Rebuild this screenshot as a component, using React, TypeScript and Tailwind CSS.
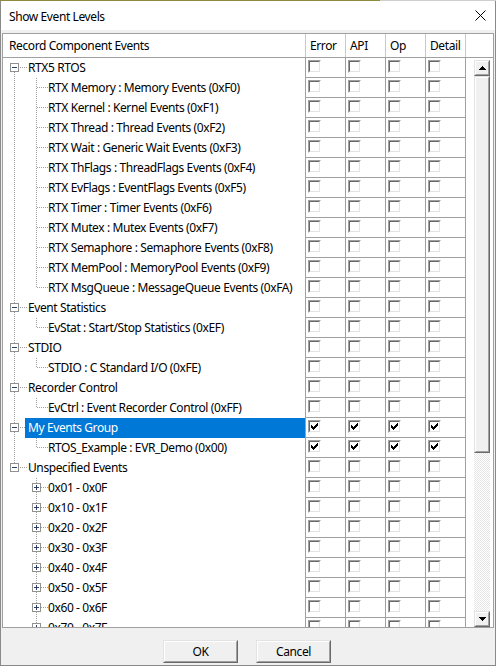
import React from "react";

type Kind = "root" | "leaf" | "collapsed";
type Row = {
  label: string;
  kind: Kind;
  firstRoot?: boolean;
  lastRoot?: boolean;
  lastChild?: boolean;
  parentLast?: boolean;
  checked?: boolean;
  selected?: boolean;
};

const rtx = [
  "RTX Memory : Memory Events (0xF0)",
  "RTX Kernel : Kernel Events (0xF1)",
  "RTX Thread : Thread Events (0xF2)",
  "RTX Wait : Generic Wait Events (0xF3)",
  "RTX ThFlags : ThreadFlags Events (0xF4)",
  "RTX EvFlags : EventFlags Events (0xF5)",
  "RTX Timer : Timer Events (0xF6)",
  "RTX Mutex : Mutex Events (0xF7)",
  "RTX Semaphore : Semaphore Events (0xF8)",
  "RTX MemPool : MemoryPool Events (0xF9)",
  "RTX MsgQueue : MessageQueue Events (0xFA)",
];

const ROWS: Row[] = [
  { label: "RTX5 RTOS", kind: "root", firstRoot: true },
  ...rtx.map((l, i) => ({ label: l, kind: "leaf" as Kind, lastChild: i === rtx.length - 1 })),
  { label: "Event Statistics", kind: "root" },
  { label: "EvStat : Start/Stop Statistics (0xEF)", kind: "leaf", lastChild: true },
  { label: "STDIO", kind: "root" },
  { label: "STDIO : C Standard I/O (0xFE)", kind: "leaf", lastChild: true },
  { label: "Recorder Control", kind: "root" },
  { label: "EvCtrl : Event Recorder Control (0xFF)", kind: "leaf", lastChild: true },
  { label: "My Events Group", kind: "root", selected: true, checked: true },
  { label: "RTOS_Example : EVR_Demo (0x00)", kind: "leaf", lastChild: true, checked: true },
  { label: "Unspecified Events", kind: "root", lastRoot: true },
  ...["0x01 - 0x0F", "0x10 - 0x1F", "0x20 - 0x2F", "0x30 - 0x3F", "0x40 - 0x4F", "0x50 - 0x5F", "0x60 - 0x6F", "0x70 - 0x7F"].map(
    (l) => ({ label: l, kind: "collapsed" as Kind, parentLast: true })
  ),
];

const DOT = "#a0a0a0";

function Dotted({ x1, y1, x2, y2 }: { x1: number; y1: number; x2: number; y2: number }) {
  return <line x1={x1} y1={y1} x2={x2} y2={y2} stroke={DOT} strokeWidth={1} strokeDasharray="1 1" />;
}

function Box({ x, plus }: { x: number; plus: boolean }) {
  return (
    <g>
      <rect x={x + 0.5} y={5.5} width={8} height={8} fill="#ffffff" stroke="#919191" strokeWidth={1} />
      <line x1={x + 2} y1={9.5} x2={x + 7} y2={9.5} stroke="#2d3f6e" strokeWidth={1} />
      {plus && <line x1={x + 4.5} y1={7} x2={x + 4.5} y2={12} stroke="#2d3f6e" strokeWidth={1} />}
    </g>
  );
}

function TreeLines({ row }: { row: Row }) {
  if (row.kind === "root") {
    return (
      <svg width={25} height={20} className="shrink-0 block" shapeRendering="crispEdges">
        {!row.firstRoot && <Dotted x1={11.5} y1={0} x2={11.5} y2={5} />}
        {!row.lastRoot && <Dotted x1={11.5} y1={14} x2={11.5} y2={20} />}
        <Dotted x1={17} y1={9.5} x2={25} y2={9.5} />
        <Box x={7} plus={false} />
      </svg>
    );
  }
  return (
    <svg width={45} height={20} className="shrink-0 block" shapeRendering="crispEdges">
      {!row.parentLast && <Dotted x1={11.5} y1={0} x2={11.5} y2={20} />}
      {row.kind === "leaf" ? (
        <>
          <Dotted x1={33.5} y1={0} x2={33.5} y2={row.lastChild ? 10 : 20} />
          <Dotted x1={34} y1={9.5} x2={45} y2={9.5} />
        </>
      ) : (
        <>
          <Dotted x1={33.5} y1={0} x2={33.5} y2={5} />
          <Dotted x1={33.5} y1={14} x2={33.5} y2={20} />
          <Dotted x1={38} y1={9.5} x2={45} y2={9.5} />
          <Box x={29} plus={true} />
        </>
      )}
    </svg>
  );
}

function CheckMark() {
  const px: [number, number][] = [
    [6, 0],
    [5, 1], [6, 1],
    [0, 2], [4, 2], [5, 2], [6, 2],
    [0, 3], [1, 3], [3, 3], [4, 3], [5, 3],
    [0, 4], [1, 4], [2, 4], [3, 4], [4, 4],
    [1, 5], [2, 5], [3, 5],
    [2, 6],
  ];
  return (
    <svg width={7} height={7} className="block" shapeRendering="crispEdges">
      {px.map(([x, y], i) => (
        <rect key={i} x={x} y={y} width={1} height={1} fill="#000000" />
      ))}
    </svg>
  );
}

function CheckBox({ checked }: { checked?: boolean }) {
  return (
    <div className="w-[13px] h-[13px] flex border-t border-l border-t-[#a0a0a0] border-l-[#a0a0a0] border-b border-r border-b-white border-r-white">
      <div className="flex-1 flex items-start justify-start pl-[1px] pt-[1px] bg-white border-t border-l border-t-[#696969] border-l-[#696969] border-b border-r border-b-[#e3e3e3] border-r-[#e3e3e3]">
        {checked && <CheckMark />}
      </div>
    </div>
  );
}

function Bevel({ children, className }: { children?: React.ReactNode; className?: string }) {
  return (
    <div className={"flex border-t border-l border-t-[#e3e3e3] border-l-[#e3e3e3] border-b border-r border-b-[#696969] border-r-[#696969] " + (className ?? "")}>
      <div className="flex-1 flex items-center justify-center bg-[#f0f0f0] border-t border-l border-t-white border-l-white border-b border-r border-b-[#a0a0a0] border-r-[#a0a0a0]">
        {children}
      </div>
    </div>
  );
}

function Arrow({ up }: { up: boolean }) {
  return (
    <svg width={7} height={4} className="block" shapeRendering="crispEdges">
      {up ? <polygon points="3.5,0 7,4 0,4" fill="#000" /> : <polygon points="0,0 7,0 3.5,4" fill="#000" />}
    </svg>
  );
}

const FONT = "font-['Segoe_UI','Noto_Sans',sans-serif] tracking-[-0.4px]";

export default function App() {
  return (
    <div className={"w-[496px] h-[666px] flex flex-col bg-[#f0f0f0] text-black text-[12px] " + FONT}>
      {/* top frame line */}
      <div className="h-px flex shrink-0">
        <div className="w-[380px] bg-[#8d8b3a]" />
        <div className="flex-1 bg-[#cfcfcf]" />
      </div>
      <div className="flex-1 flex flex-col border-l border-r border-b border-[#8a8a8a]">
        {/* title bar */}
        <div className="h-[29px] shrink-0 bg-white flex items-center justify-between pl-[8px] pr-[9px]">
          <span className="leading-none pt-[2px]">Show Event Levels</span>
          <svg width={11} height={11} className="block" shapeRendering="geometricPrecision">
            <line x1={0.5} y1={0.5} x2={10.5} y2={10.5} stroke="#000" strokeWidth={1} />
            <line x1={10.5} y1={0.5} x2={0.5} y2={10.5} stroke="#000" strokeWidth={1} />
          </svg>
        </div>

        {/* list */}
        <div className="mt-[3px] ml-[1px] w-[492px] h-[595px] shrink-0 flex flex-col border border-[#a0a0a0] bg-white">
          {/* header */}
          <div className="h-[24px] shrink-0 flex border-b border-[#a0a0a0]">
            <div className="w-[302px] pl-[6px] flex items-center">Record Component Events</div>
            {["Error", "API", "Op", "Detail"].map((h) => (
              <div key={h} className="w-[40px] border-l border-[#c8c8c8] pl-[4px] flex items-center">
                {h}
              </div>
            ))}
            <div className="flex-1 border-l border-[#c8c8c8]" />
          </div>
          {/* body */}
          <div className="flex-1 flex min-h-0">
            <div className="w-[462px] flex flex-col overflow-hidden">
              {ROWS.map((r, i) => (
                <div key={i} className="h-[20px] shrink-0 flex">
                  <div className="w-[302px] flex">
                    <TreeLines row={r} />
                    <div
                      className={
                        "flex-1 -ml-[3px] pl-[3px] leading-[20px] whitespace-nowrap " +
                        (r.selected ? "bg-[#0078d7] text-white" : "")
                      }
                    >
                      {r.label}
                    </div>
                  </div>
                  {[0, 1, 2, 3].map((c) => (
                    <div key={c} className="w-[40px] border-l border-b border-[#a0a0a0] pl-[2px] pt-[2px]">
                      <CheckBox checked={r.checked} />
                    </div>
                  ))}
                </div>
              ))}
            </div>
            <div className="flex-1 border-l border-[#a0a0a0] pl-[8px] pt-[2px] flex">
              <div className="w-[16px] flex flex-col">
                <Bevel className="h-[16px] shrink-0">
                  <Arrow up />
                </Bevel>
                <Bevel className="h-[377px] shrink-0" />
                <div className="flex-1 bg-[image:repeating-conic-gradient(#e6e6e6_0%_25%,#ffffff_0%_50%)] bg-[length:2px_2px]" />
                <Bevel className="h-[16px] shrink-0">
                  <Arrow up={false} />
                </Bevel>
              </div>
            </div>
          </div>
        </div>

        {/* buttons */}
        <div className="mt-[12px] h-[23px] shrink-0 flex pl-[162px] gap-[18px]">
          <Bevel className="w-[75px]">
            <span>OK</span>
          </Bevel>
          <Bevel className="w-[75px]">
            <span>Cancel</span>
          </Bevel>
        </div>
      </div>
    </div>
  );
}
